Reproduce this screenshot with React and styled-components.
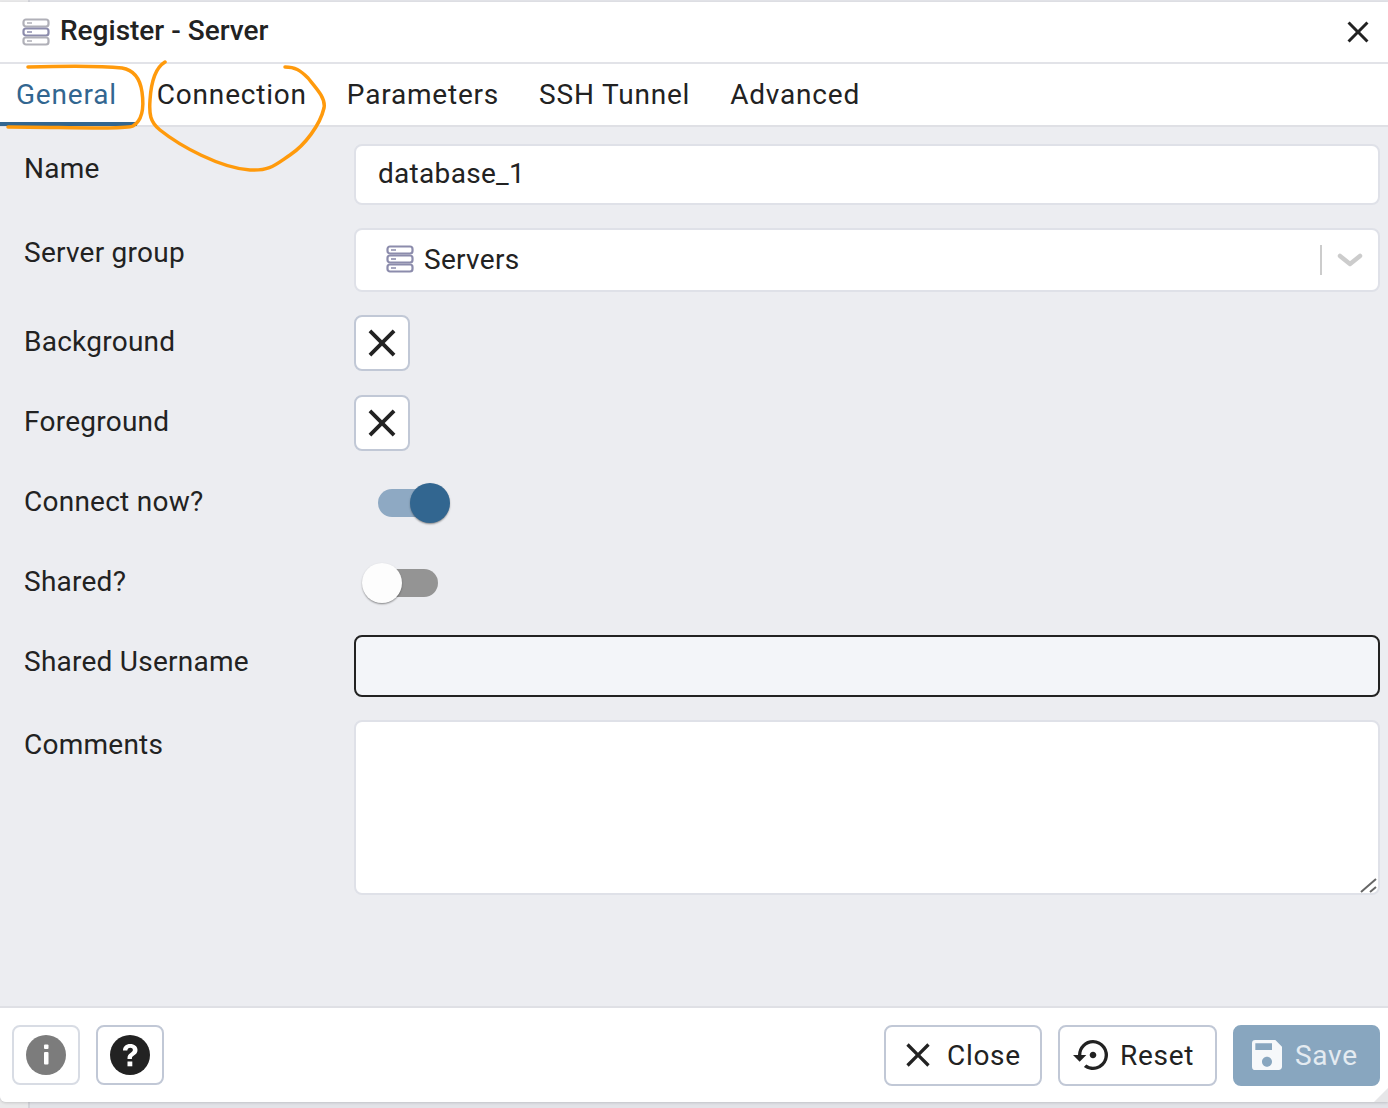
import React from 'react';
import styled, { createGlobalStyle } from 'styled-components';
import { MdClose, MdSettingsBackupRestore, MdSave } from 'react-icons/md';

const GlobalStyle = createGlobalStyle`
  html, body {
    margin: 0;
    padding: 0;
    overflow: hidden;
  }
  * {
    box-sizing: border-box;
  }
`;

const Page = styled.div`
  position: relative;
  width: 1388px;
  height: 1108px;
  padding-top: 2px;
  font-family: Roboto, "Liberation Sans", sans-serif;
  color: #222;
  background: linear-gradient(
    to right,
    #e9e9ea 0,
    #e9e9ea 28px,
    #d3d4da 28px,
    #d3d4da 30px,
    #e2e3e8 30px
  );
`;

const Dialog = styled.div`
  display: flex;
  flex-direction: column;
  height: 1100px;
  background: #ecedf1;
  border-bottom-left-radius: 6px;
  overflow: hidden;
  box-shadow: 0 1px 3px rgba(0, 0, 0, 0.15);
`;

const TitleBar = styled.header`
  display: flex;
  align-items: center;
  height: 60px;
  flex-shrink: 0;
  padding: 0 12px 0 22px;
  background: #fff;
`;

const Title = styled.h1`
  flex: 1;
  margin: 0 0 4px 10px;
  font-size: 28px;
  font-weight: 500;
  letter-spacing: 0;
  color: #222;
`;

const CloseIcon = styled(MdClose)`
  display: block;
  width: 36px;
  height: 36px;
  color: #222;
`;

const Tabs = styled.nav`
  display: flex;
  height: 65px;
  flex-shrink: 0;
  background: #fff;
  border-top: 2px solid #e2e3e8;
  border-bottom: 2px solid #dfe0e5;
`;

const Tab = styled.div`
  display: flex;
  align-items: center;
  height: 62px;
  padding: 2px 20px 0;
  font-size: 28px;
  letter-spacing: 0.8px;
  color: ${(p) => (p.$active ? '#326690' : '#222')};
  border-bottom: 4px solid ${(p) => (p.$active ? '#326690' : 'transparent')};
  &:first-child {
    padding-left: 16px;
  }
`;

const Form = styled.main`
  flex: 1;
  display: grid;
  grid-template-columns: 354px 1026px;
  grid-auto-rows: min-content;
  row-gap: 24px;
  align-content: start;
  padding-top: 17px;
`;

const Label = styled.label`
  padding: ${(p) => (p.$snug ? 7 : 9)}px 0 0 24px;
  height: 44px;
  font-size: 28px;
  line-height: 36px;
  letter-spacing: 0.25px;
  color: #222;
`;

const TextInput = styled.input`
  display: block;
  width: 100%;
  height: ${(p) => (p.$focused ? 62 : 61)}px;
  margin-bottom: -1px;
  padding: 0 22px 2px;
  font-family: inherit;
  font-size: 28px;
  letter-spacing: 0.3px;
  color: #222;
  background: ${(p) => (p.$focused ? '#f3f5f9' : '#fff')};
  border: 2px solid ${(p) => (p.$focused ? '#222' : '#dfe1e8')};
  border-radius: 8px;
  outline: none;
`;

const TextAreaBox = styled.div`
  position: relative;
  height: 175px;
`;

const TextArea = styled.textarea`
  display: block;
  width: 100%;
  height: 100%;
  background: #fff;
  border: 2px solid #dfe1e8;
  border-radius: 8px;
  outline: none;
  resize: none;
`;

const Grip = styled.svg`
  position: absolute;
  right: 2px;
  bottom: 2px;
`;

const Select = styled.div`
  display: flex;
  align-items: center;
  height: 64px;
  margin-bottom: -1px;
  padding: 0 15px 2px 30px;
  font-size: 28px;
  letter-spacing: 0.3px;
  background: #fff;
  border: 2px solid #dfe1e8;
  border-radius: 8px;
`;

const SelectText = styled.span`
  flex: 1;
  margin-left: 10px;
`;

const SelectDivider = styled.span`
  width: 2px;
  height: 30px;
  margin: 2px 15px 0 0;
  background: #ccc;
`;

const SelectChevron = styled.svg`
  margin-top: 2px;
`;

const ColorButton = styled.button`
  display: flex;
  align-items: center;
  justify-content: center;
  width: 56px;
  height: 56px;
  padding: 0;
  background: #fff;
  border: 2px solid #c1c8d6;
  border-radius: 8px;
`;

const ColorX = styled(MdClose)`
  flex-shrink: 0;
  width: 46px;
  height: 46px;
  color: #222;
`;

const SwitchBox = styled.div`
  position: relative;
  width: 96px;
  height: 56px;
`;

const SwitchTrack = styled.span`
  position: absolute;
  top: 14px;
  left: ${(p) => (p.$on ? '24px' : '10px')};
  width: ${(p) => (p.$on ? '60px' : '74px')};
  height: 28px;
  border-radius: 14px;
  background: ${(p) => (p.$on ? '#8ea9c3' : '#949494')};
`;

const SwitchThumb = styled.span`
  position: absolute;
  top: 8px;
  left: ${(p) => (p.$on ? '56px' : '8px')};
  width: 40px;
  height: 40px;
  border-radius: 50%;
  background: ${(p) => (p.$on ? '#326690' : '#fdfdfd')};
  box-shadow: 0 2px 2px -1px rgba(0, 0, 0, 0.25), 0 1px 2px rgba(0, 0, 0, 0.25);
`;

const Footer = styled.footer`
  display: flex;
  align-items: center;
  height: 96px;
  flex-shrink: 0;
  padding: 0 8px 0 12px;
  background: #fff;
  border-top: 2px solid #dfe0e5;
`;

const FooterLeft = styled.div`
  display: flex;
  flex: 1;
  gap: 16px;
`;

const FooterRight = styled.div`
  display: flex;
  gap: 16px;
`;

const IconButton = styled.button`
  display: flex;
  align-items: center;
  justify-content: center;
  width: 68px;
  height: 60px;
  padding: 0;
  background: #fff;
  border: 2px solid ${(p) => (p.$dim ? '#d8dce4' : '#c1c8d6')};
  border-radius: 8px;
`;

const ActionButton = styled.button`
  display: flex;
  align-items: center;
  gap: ${(p) => p.$gap}px;
  width: ${(p) => p.$width}px;
  height: 61px;
  padding: 0 0 0 ${(p) => p.$pad || 12}px;
  font-family: inherit;
  font-size: 28px;
  letter-spacing: 0.7px;
  color: ${(p) => (p.$primary ? '#e4ebf1' : '#222')};
  background: ${(p) => (p.$primary ? '#88a6bf' : '#fff')};
  border: 2px solid ${(p) => (p.$primary ? '#88a6bf' : '#c1c8d6')};
  border-radius: 8px;
  svg {
    flex-shrink: 0;
    color: ${(p) => (p.$primary ? '#f6f8fa' : '#222')};
  }
`;

const Annotation = styled.svg`
  position: absolute;
  top: 0;
  left: 0;
  pointer-events: none;
`;

const ResizeCorner = styled.span`
  position: absolute;
  right: 0;
  top: 1088px;
  width: 0;
  height: 0;
  border-left: 14px solid transparent;
  border-bottom: 14px solid #e6e6e8;
`;

const ServerIcon = ({ outer = '#b0b0b8', inner = '#8c8cac' }) => (
  <svg width="28" height="28" viewBox="0 0 28 28" fill="#fff">
    <g strokeWidth="2.2">
      <rect x="1.5" y="1.500" width="25" height="7" rx="2.5" stroke={outer} />
      <rect x="1.5" y="10.500" width="25" height="7" rx="2.5" stroke={inner} />
      <rect x="1.5" y="19.500" width="25" height="7" rx="2.5" stroke={outer} />
    </g>
    <path d="M5 5h5M5 23h5" stroke={outer} strokeWidth="1.6" />
    <path d="M5 14h5" stroke={inner} strokeWidth="1.6" />
  </svg>
);

const Chevron = () => (
  <SelectChevron width="26" height="14" viewBox="0 0 26 14" fill="none">
    <path d="M3 3l10 8 10-8" stroke="#ccc" strokeWidth="4.500" strokeLinecap="round" strokeLinejoin="round" />
  </SelectChevron>
);

const InfoIcon = () => (
  <svg width="40" height="40" viewBox="0 0 40 40">
    <circle cx="20" cy="20" r="20" fill="#7c7c7c" />
    <rect x="18" y="9.500" width="4.500" height="4.500" rx="1" fill="#fff" />
    <rect x="18" y="17" width="4.500" height="12.500" rx="1" fill="#fff" />
  </svg>
);

const HelpIcon = () => (
  <svg width="40" height="40" viewBox="0 0 40 40">
    <circle cx="20" cy="20" r="20" fill="#222" />
    <path
      d="M13 15.500c0-4 3-6.500 7.200-6.500 4.200 0 7.300 2.500 7.300 6 0 3-1.800 4.300-3.600 5.500-1.400 1-2 1.500-2 3v0.500h-4.400v-1c0-2.700 1.200-3.900 3-5.100 1.300-.9 2.400-1.600 2.400-2.900 0-1.400-1.100-2.300-2.700-2.300-1.700 0-2.800 1.100-2.900 2.800z"
      fill="#fff"
    />
    <rect x="17.500" y="26.500" width="4.800" height="4.800" fill="#fff" />
  </svg>
);

const Switch = ({ on }) => (
  <SwitchBox>
    <SwitchTrack $on={on} />
    <SwitchThumb $on={on} />
  </SwitchBox>
);

const App = () => {
  return (
    <Page>
      <GlobalStyle />
      <Dialog>
        <TitleBar>
          <ServerIcon />
          <Title>Register - Server</Title>
          <CloseIcon />
        </TitleBar>

        <Tabs>
          <Tab $active>General</Tab>
          <Tab>Connection</Tab>
          <Tab>Parameters</Tab>
          <Tab>SSH Tunnel</Tab>
          <Tab>Advanced</Tab>
        </Tabs>

        <Form>
          <Label $snug>Name</Label>
          <TextInput defaultValue="database_1" />

          <Label $snug>Server group</Label>
          <Select>
            <ServerIcon outer="#8c8cac" />
            <SelectText>Servers</SelectText>
            <SelectDivider />
            <Chevron />
          </Select>

          <Label>Background</Label>
          <ColorButton>
            <ColorX />
          </ColorButton>

          <Label>Foreground</Label>
          <ColorButton>
            <ColorX />
          </ColorButton>

          <Label>Connect now?</Label>
          <Switch on />

          <Label>Shared?</Label>
          <Switch />

          <Label>Shared Username</Label>
          <TextInput $focused />

          <Label $snug>Comments</Label>
          <TextAreaBox>
            <TextArea />
            <Grip width="18" height="16" viewBox="0 0 18 16" fill="none">
              <path d="M1 15L16 2M10 15l6-5" stroke="#666" strokeWidth="2" />
            </Grip>
          </TextAreaBox>
        </Form>

        <Footer>
          <FooterLeft>
            <IconButton $dim>
              <InfoIcon />
            </IconButton>
            <IconButton>
              <HelpIcon />
            </IconButton>
          </FooterLeft>
          <FooterRight>
            <ActionButton $width={158} $gap={9}>
              <MdClose size={40} />
              Close
            </ActionButton>
            <ActionButton $width={159} $gap={7} $pad={13}>
              <MdSettingsBackupRestore size={40} />
              Reset
            </ActionButton>
            <ActionButton $width={147} $gap={8} $primary>
              <MdSave size={40} />
              Save
            </ActionButton>
          </FooterRight>
        </Footer>
      </Dialog>

      <ResizeCorner />

      <Annotation width="1388" height="200" viewBox="0 0 1388 200" fill="none">
        <path
          d="M28 67C60 66 95 65 122 68C134 70 140 78 142 92C144 106 143 120 133 126C124 130 60 127 8 127"
          stroke="#ff9a0c"
          strokeWidth="3.500"
          strokeLinecap="round"
        />
        <path
          d="M165 62C155 68 151 84 150 100C149 114 150 122 160 130C180 146 220 168 250 170C270 171 275 165 290 155C305 145 320 125 324 108C326 98 316 88 308 78C300 70 295 67 285 67"
          stroke="#ff9a0c"
          strokeWidth="3.500"
          strokeLinecap="round"
        />
      </Annotation>
    </Page>
  );
};

export default App;
